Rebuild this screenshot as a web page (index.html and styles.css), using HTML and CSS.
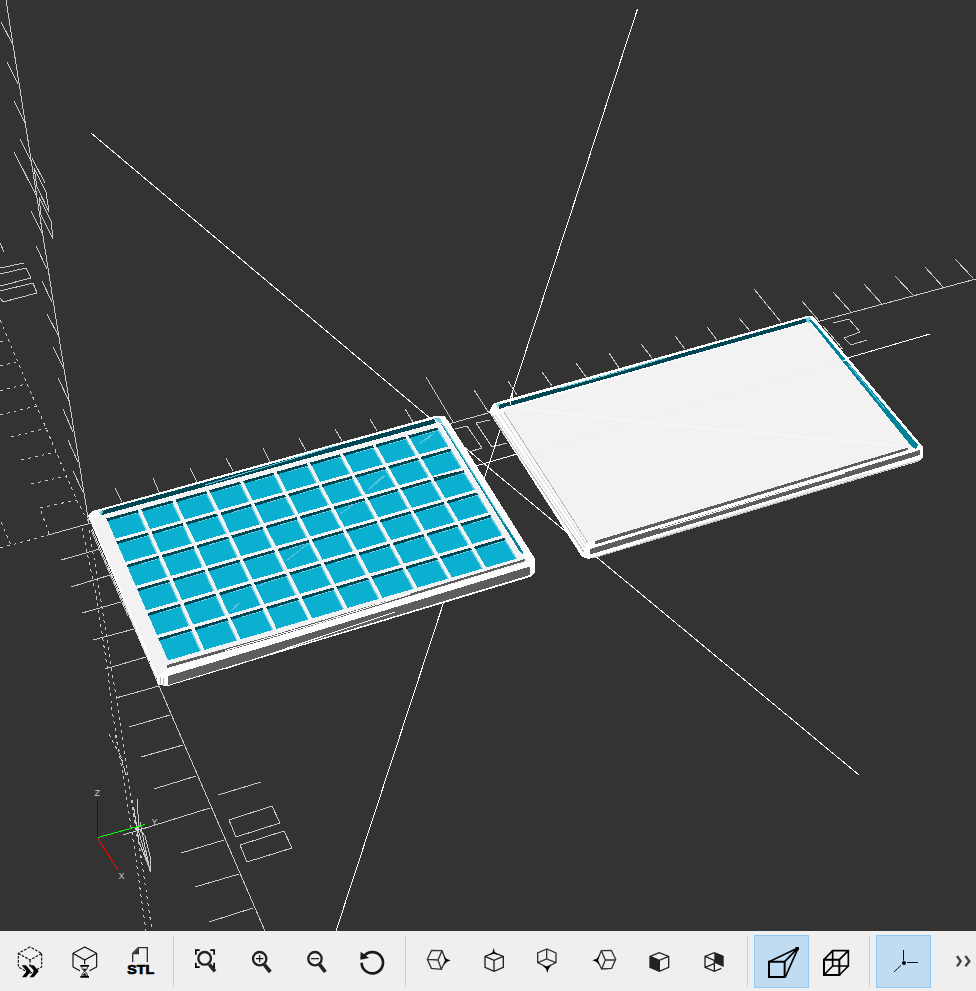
FILE: index.html
```html
<!DOCTYPE html>
<html lang="en">
<head>
<meta charset="utf-8">
<title>3D View</title>
<link rel="stylesheet" href="styles.css">
</head>
<body>
<main class="viewer">
<svg class="scene" viewBox="0 0 976 931" width="976" height="931">
  <g class="axis">
    <path d="M6 0L53 300L89 524M1 22L12 43M7 62L18 84M14 101L25 123M20 139L31 161M14 152L37 197M31 211L42 233M36 246L47 269M42 281L52 302M47 314L59 337M53 347L64 369M58 378L69 401M63 409L73 432M68 440L78 462M73 471L83 492"/>
    <path d="M32 158L45 183M34 168L46 192L49 212L37 187ZM39 197L51 221L53 239L41 215Z"/>
    <path d="M0 243L4 252M0 268L24 263M0 274L26 268L31 278L0 286M0 291L33 283L37 293L3 302L0 298"/>
    <path d="M48 535L820 321L976 279M89 515L159 686L265 931"/>
    <path d="M115 488L122 502M153 478L159 492M190 468L197 482M226 458L233 471M263 448L270 462M299 438L306 451M335 429L342 441M370 419L377 431M405 409L413 422M426 377L453 422M474 390L489 413M508 381L517 395M542 372L552 386M576 363L586 377M609 353L619 368M641 344L652 358M675 336L685 349M707 327L717 340M739 318L750 331M754 289L781 322M802 301L819 321M833 292L851 312M864 284L882 304M895 276L913 295M925 267L943 287M955 259L973 278"/>
    <path d="M61 560L100 549M71 587L110 575M82 613L121 602M93 640L134 629M105 669L146 657M116 698L159 686M129 727L170 715M141 757L183 745M154 789L196 776M123 835L210 808M181 853L224 840M195 887L239 874M209 922L253 908"/>
    <path d="M218 795L261 782M229 820L272 806L280 823L236 837ZM240 845L284 831L292 848L247 862Z"/>
    <path d="M455 429L467 426L482 448L469 452M490 420L476 423L492 447L507 443M823 326L842 348L837 348M833 323L849 319L860 332L844 338L851 345L867 340"/>
    <path d="M137 799L139 829L145 836L150 856L151 872L139 842L134 809M140 822L150 871M136 822L148 864"/>
  </g>
  <g class="axis dashed">
    <path d="M0 320L77 501L89 523M0 342L7 341M0 366L16 362M0 391L26 384M0 415L36 406M11 437L47 428M21 460L56 452M31 484L66 476M49 534L40 508L76 500M0 548L48 535M1 522L11 545"/>
    <path d="M82 528L97 600L108 673L112 710L127 800L135 853L146 931M89 530L97 575L108 647L122 733L132 807L143 870L152 931M109 734L121 757L127 778M115 735L126 776M132 800L142 862"/>
  </g>
  <g class="rays"><path d="M91 133L488 467L859 775M637.500 9L488 467L336 931M400 488L930 334"/></g>
  <g class="gizmo">
    <path stroke="#00f" d="M97.5 800V838"/><path stroke="#0f0" d="M98 837.5L145 824.5"/><path stroke="#f00" d="M97.5 838L118 870"/>
    <text x="94.5" y="796">Z</text><text x="151.5" y="825">Y</text><text x="118.5" y="879">X</text>
  </g>

  <g class="tray">
    <path class="white" d="M88 516L92 511L100 509L437 415.5L445 416.5L449 422L534.500 558V573L530 577L168 686L158 685L156.500 678Z"/>
    <path class="face" d="M96 517L439 423L524 558L530 561L165 670L158 676L92 520Z"/>
    <path class="gray" d="M168 676L530 566.5V575L168 685Z"/>
    <path class="edge" d="M225 669L310 640.500L395 612"/>
    <path class="gray" d="M167 665L270 636L525 559L525.500 561L270 638.500L167 668Z"/>
    <path class="edge" d="M225 650.500L325 621L410 594"/>
    <path class="lightgroove" d="M92 529L156 678"/>
    <path class="groove" d="M91 530L128 616M160 677V684M163 678V685"/>
    <path class="deep" d="M102 510.500L434 419L436 423L102 515Z"/>
    <path class="pale" d="M99 512L104 510L101 516ZM434 418L440 418L443 424L440 423L437 422Z"/>
    <path class="sheen" d="M205 485L265 467L335 446"/>
    <path class="wall" d="M441 424L444 426L523 552V555L520 552Z"/>
    <path class="sheen" d="M443 425L468 465L505 524"/>
    <g id="cells"></g>
    <path class="sheen" d="M419 444L431 435M424 442L436 431M368 490L386 475M372 486L383 476M340 514L354 504M286 561L309 543M260 586L266 582M231 611L238 605M234 606L240 603"/>
    <path class="edge" d="M400 487L463 469"/>
    <path class="crack" d="M400 489L430 481M433 478L463 471"/>
  </g>

  <g class="lid">
    <path class="white" d="M489 412L493 404L498 402L807 316L812 316L817 321L923 447V457L920 461L588 559L582 557Z"/>
    <path class="face" d="M504 410L809 322L914 448L595 541L588 541L503 414Z"/>
    <path class="deep" d="M498 405L806 318.500L809 321.500L499 409Z"/>
    <path class="pale" d="M496 404L500 403L498 409ZM805 318L810 317L812 322L808 323Z"/>
    <path class="sheen" d="M560 388L618 372L665 358"/>
    <path class="wall" d="M809 320L812 320L918 445L916 449L912 447Z"/>
    <path class="sheen" d="M848 364L864 383L885 409"/>
    <path class="groove" d="M492 415L584 552M504 412L588 543"/>
    <path class="lightgroove" d="M495 415L585 548M500 414L586 544"/>
    <path class="gray" d="M595 541L908 447.500V450L595 544.500Z"/>
    <path class="gray" d="M590 549L920 450V455L590 554.500Z"/>
    <path class="edge" d="M660 529L845 473M640 541L820 486"/>
    <path class="groove" d="M593 558L920 460"/>
    <path class="lightgroove" d="M640 543L870 473"/>
    <path class="crease" d="M506 407L660 424L902 446"/>
    <path class="faint" d="M518 457L846 360"/>
    <path class="edge" d="M510 405L513 394"/>
  </g>
</svg>
</main>
<nav class="toolbar">
  <div class="group">
    <button class="tool"><svg viewBox="9 3 165 180"><path class="l" stroke-dasharray="8 4" d="M90 51L55 70V111L90 130L125 111V70ZM55 70L90 90L125 70M90 90V110"/><path d="M65 106H78L93 124L78 142H66L80 124ZM88 106H101L116 124L101 142H89L103 124Z"/></svg></button>
    <button class="tool"><svg viewBox="174 3 165 180"><path class="l" d="M254 51L219 70V111L254 130L290 111V70ZM219 70L254 90L290 70M254 90V108"/><path fill="#efefef" d="M240 103H268V145H240Z"/><path d="M241 105H267V110H241ZM241 138H267V143H241Z"/><path class="n" d="M245 110Q245 119 254 124Q245 129 245 138M263 110Q263 119 254 124Q263 129 263 138"/><path d="M248 116H260L254 123ZM247 137L254 128L261 137Z"/></svg></button>
    <button class="tool"><svg viewBox="339 3 165 180"><path class="l soft" d="M398 96V70L415 53H442V96"/><path d="M398 73L417 53V73Z" fill="#333"/><text class="stl" x="382" y="133" textLength="81" lengthAdjust="spacingAndGlyphs">STL</text></svg></button>
  </div>
  <span class="sep"></span>
  <div class="group">
    <button class="tool"><svg viewBox="540 3 165 180"><path d="M585 58H599V63H590V74H585ZM631 58H645V74H640V63H631ZM585 98H590V109H599V114H585ZM631 109H640V98H645V114H631Z"/><circle class="lens" cx="614" cy="85" r="19"/><path class="handle" d="M628 103L645 124"/></svg></button>
    <button class="tool"><svg viewBox="-15 3 165 180"><circle class="lens" cx="59" cy="86" r="20"/><path class="handle" d="M73 104L91 126"/><path class="l" d="M48 86H70M59 75V97"/></svg></button>
    <button class="tool"><svg viewBox="150 3 165 180"><circle class="lens" cx="225" cy="86" r="20"/><path class="handle" d="M239 104L256 126"/><path class="l" d="M213 86H237"/></svg></button>
    <button class="tool"><svg viewBox="315 3 165 180"><path class="turn" d="M373 77A32 32 0 1 1 365 98"/><path fill="#1a1a1a" d="M362 65L387 84L361 89Z"/></svg></button>
  </div>
  <span class="sep"></span>
  <div class="group">
    <button class="tool"><svg viewBox="516 3 165 180"><path class="l soft" d="M575 61L562 88L574 115L604 118L617 91L606 62ZM562 88L594 90L606 62M594 90L604 118"/><path d="M612 78L620 87L632 91L620 96L612 105L616 91Z"/></svg></button>
    <button class="tool"><svg viewBox="-39 3 165 180"><path class="l cube" d="M42 68L15 79V112L42 124L70 112V79ZM15 79L42 91L70 79M42 91V124"/><path d="M41 53L44 66L54 75L41 71L29 75L38 66Z"/></svg></button>
    <button class="tool"><svg viewBox="126 3 165 180"><path class="l soft" d="M200 57L173 69V98L200 111L228 98V69ZM173 98L200 87L228 98M200 57V87"/><path d="M188 107L201 110L214 106L206 116L202 129L198 116Z"/></svg></button>
    <button class="tool"><svg viewBox="291 3 165 180"><path class="l soft" d="M364 62L394 61L407 88L395 115L365 117L352 91ZM364 62L376 90H407M376 90L365 117"/><path d="M358 78L354 90L358 104L350 96L337 91L350 86Z"/></svg></button>
    <button class="tool"><svg viewBox="456 3 165 180"><path class="l cube" d="M538 68L510 79V112L538 124L566 112V79ZM510 79L538 91L566 79M538 91V124"/><path fill="#222" d="M510 79L538 91V124L510 112Z"/></svg></button>
    <button class="tool"><svg viewBox="621 3 165 180"><path class="l cube" d="M730 79L703 68L675 79V112L703 124L724 115M675 79L703 91V124M675 112L703 101"/><path fill="#222" d="M703 68L731 79V111L703 98Z"/></svg></button>
  </div>
  <span class="sep"></span>
  <div class="group">
    <button class="tool active"><svg viewBox="72 3 165 180"><path class="heavy" d="M117 95H164V141H117Z"/><path class="l thick" d="M117 95L205 53L164 95M205 53L166 141"/><path d="M196 51H207V60H199Z"/></svg></button>
    <button class="tool"><svg viewBox="237 3 165 180"><path class="heavy" d="M282 89H328V135H282Z"/><path class="l thick" d="M308 62H355V108H308ZM282 89L308 62M328 89L355 62M282 135L308 108M328 135L355 108"/></svg></button>
  </div>
  <span class="sep"></span>
  <div class="group">
    <button class="tool active"><svg viewBox="438 3 165 180"><path class="l fine" d="M520.500 60V92M531 97.500H564M513 106L492 126"/><circle cx="522" cy="99" r="6"/></svg></button>
  </div>
  <button class="more"><svg viewBox="603 3 135 180"><path d="M681 78L692 94L681 109M706 78L718 94L706 109"/></svg></button>
</nav>
<script src="cells.js"></script>
</body>
</html>
```
FILE: styles.css
```css
* { box-sizing: border-box; }
body { margin: 0; width: 976px; height: 991px; overflow: hidden; display: flex; flex-direction: column; background: #333; font-family: "Liberation Sans", sans-serif; }
.viewer { height: 931px; background: #333; }
.scene { display: block; }
.scene path { fill: none; shape-rendering: crispEdges; }
.axis { stroke: #c8c8c8; stroke-width: 1; }
.dashed { stroke-dasharray: 3 4; }
.rays { stroke: #fff; stroke-width: 1; }
.gizmo { stroke-width: 1; }
.gizmo text { fill: #c8c8c8; font-size: 9px; }
.scene .white { fill: #fcfcfc; }
.scene .face { fill: #f2f2f2; }
.scene .gray { fill: #5d5d5d; }
.scene .deep { fill: #004653; }
.scene .wall { fill: #008299; }
.scene .pale { fill: #79cfe0; }
.scene .cyan { fill: #0bafcf; }
.edge { stroke: #f7f7f7; }
.groove { stroke: #b9b9b9; }
.lightgroove { stroke: #dedede; }
.sheen { stroke: #58c3d9; }
.crack { stroke: #123b43; }
.crease { stroke: #f6f6f6; stroke-width: 2; }
.faint { stroke: #efefef; }
.toolbar { display: flex; align-items: center; height: 60px; padding-left: 3px; background: #efefef; }
.group { display: flex; }
.tool, .more { display: block; width: 55px; height: 60px; padding: 0; border: 0; background: none; }
.more { width: 45px; }
.tool svg, .more svg { display: block; width: 100%; height: 60px; }
.active { height: 53px; border: 1px solid #90c8f6; background: #c0dcf3; align-self: center; }
.active svg { width: 55px; margin: -4.500px 0 0 -1px; }
.sep { width: 1px; height: 51px; margin: 0 6px 0 5px; background: #cfcfcf; }
.toolbar .l { fill: none; stroke: #111; stroke-width: 3.500; }
.toolbar .soft { stroke: #333; stroke-width: 4; }
.toolbar .cube { stroke: #222; stroke-width: 4; }
.toolbar .fine { stroke-width: 3; }
.toolbar .n { fill: none; stroke: #111; stroke-width: 2.500; }
.toolbar .thick { stroke: #000; stroke-width: 5; }
.toolbar .heavy { fill: none; stroke: #000; stroke-width: 6; }
.lens { fill: none; stroke: #222; stroke-width: 7; }
.handle { fill: none; stroke: #222; stroke-width: 11; }
.turn { fill: none; stroke: #1a1a1a; stroke-width: 8; }
.stl { font-size: 40px; font-weight: 700; stroke: #000; stroke-width: 2; }
.more path { fill: none; stroke: #444; stroke-width: 7; }
```
FILE: cells.js
```js
// Projects the 10 x 6 compartment grid onto the tray's visible quad.
const quad = [[106.5, 518.5], [437.5, 427.5], [517, 558.5], [168, 660.5]];
const [a, b, c, d] = quad;
const dx1 = b[0] - c[0], dx2 = d[0] - c[0], sx = a[0] - b[0] + c[0] - d[0];
const dy1 = b[1] - c[1], dy2 = d[1] - c[1], sy = a[1] - b[1] + c[1] - d[1];
const den = dx1 * dy2 - dx2 * dy1;
const g = (sx * dy2 - dx2 * sy) / den, h = (dx1 * sy - sx * dy1) / den;
function project(u, v) {
  const w = g * u + h * v + 1;
  return [
    ((b[0] - a[0] + g * b[0]) * u + (d[0] - a[0] + h * d[0]) * v + a[0]) / w,
    ((b[1] - a[1] + g * b[1]) * u + (d[1] - a[1] + h * d[1]) * v + a[1]) / w
  ];
}
const root = document.getElementById('cells');
function poly(cls, pts) {
  const p = document.createElementNS('http://www.w3.org/2000/svg', 'path');
  p.setAttribute('class', cls);
  p.setAttribute('d', 'M' + pts.map(q => q[0].toFixed(1) + ' ' + q[1].toFixed(1)).join('L') + 'Z');
  root.appendChild(p);
}
const gu = 0.0095, gv = 0.02;
const cw = (1 - 9 * gu) / 10, ch = (1 - 5 * gv) / 6;
for (let r = 0; r < 6; r++) {
  for (let k = 0; k < 10; k++) {
    const u = k * (cw + gu), v = r * (ch + gv);
    const tl = project(u, v), tr = project(u + cw, v);
    const br = project(u + cw, v + ch), bl = project(u, v + ch);
    const down = (q, x, y) => [q[0] + x, q[1] + y];
    poly('cyan', [tl, tr, br, bl]);
    poly('pale', [down(tl, 12, -0.8), down(tr, 0, 2), down(tr, 0, 3.2), down(tl, 12, 0.2)]);
    poly('pale', [down(tr, -0.5, 2), tr, br, down(br, -1.2, 0.4)]);
    poly('deep', [tl, tr, down(tr, 1, 2.3), down(tl, 1, 2.6)]);
  }
}
```
